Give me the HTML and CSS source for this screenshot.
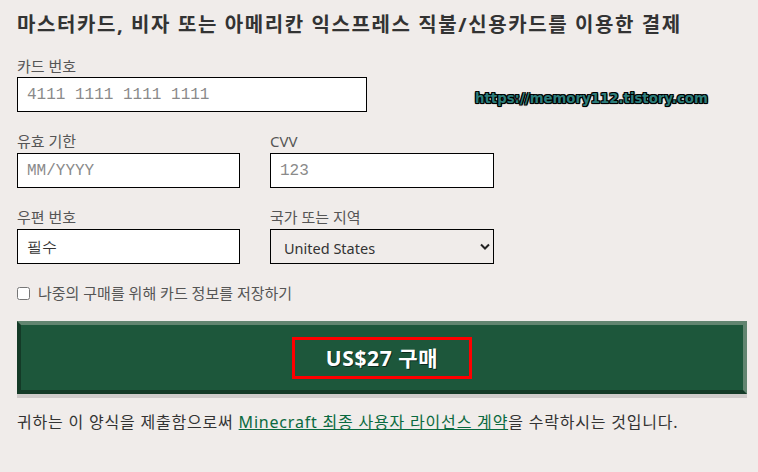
FILE: index.html
```html
<!DOCTYPE html>
<html lang="ko">
<head>
    <meta charset="UTF-8">
    <meta name="viewport" content="width=device-width, initial-scale=1.0">
    <title>결제</title>
    <link rel="stylesheet" href="styles.css">
</head>
<body>
    <main class="checkout">
        <h2 class="title">마스터카드, 비자 또는 아메리칸 익스프레스 직불/신용카드를 이용한 결제</h2>

        <div class="field card">
            <label>카드 번호</label>
            <input type="text" class="mono" placeholder="4111 1111 1111 1111">
        </div>

        <div class="row">
            <div class="field">
                <label>유효 기한</label>
                <input type="text" class="mono" placeholder="MM/YYYY">
            </div>
            <div class="field">
                <label>CVV</label>
                <input type="text" class="mono" placeholder="123">
            </div>
        </div>

        <div class="row">
            <div class="field">
                <label>우편 번호</label>
                <input type="text" class="req" placeholder="필수">
            </div>
            <div class="field">
                <label>국가 또는 지역</label>
                <div class="selectbox">
                    <select>
                        <option>United States</option>
                        <option>대한민국</option>
                    </select>
                    <svg width="10" height="7" viewBox="0 0 10 7"><path d="M1 1.5 L5 5.5 L9 1.5" fill="none" stroke="#222" stroke-width="2"/></svg>
                </div>
            </div>
        </div>

        <label class="save"><input type="checkbox"> 나중의 구매를 위해 카드 정보를 저장하기</label>

        <button class="buy"><span class="price">US$27 구매</span></button>

        <p class="terms">귀하는 이 양식을 제출함으로써 <a href="#">Minecraft 최종 사용자 라이선스 계약</a>을 수락하시는 것입니다.</p>
    </main>

    <div class="watermark">https://memory112.tistory.com</div>
</body>
</html>
```

FILE: styles.css
```css
*{margin:0px;padding:0px;box-sizing:border-box;}

body{background:#f0ecea;color:#333;font-family:"Noto Sans","Noto Sans CJK KR",sans-serif;position:relative;}

.checkout{padding:11px 11px 0 17px;}

.title{font-size:20px;line-height:28px;font-weight:bold;color:#333;letter-spacing:1.6px;margin-bottom:17px;white-space:nowrap;}

.field label{display:block;font-size:15px;line-height:20px;color:#555;margin-bottom:1px;}

.field input{
    width:100%;height:35px;
    border:1px solid #000;background:#fff;
    padding:0 9px;font-size:15px;color:#333;outline:none;
}

.card{width:350px;margin-bottom:19px;}

.mono{font-family:"Liberation Mono",monospace;font-size:16px !important;}
.mono::placeholder{color:#8a8a8a;}
.req::placeholder{color:#333;}

.row{display:grid;grid-template-columns:223px 224px;column-gap:30px;margin-bottom:19px;}
.row .field label{margin-bottom:2px;}

.selectbox{display:grid;align-items:center;}
.selectbox select,.selectbox svg{grid-area:1/1;}
.selectbox select{
    appearance:none;-webkit-appearance:none;
    height:35px;border:1px solid #000;background:transparent;
    padding:3px 13px 0;font-family:inherit;font-size:14.5px;color:#333;
}
.selectbox svg{justify-self:end;margin-right:4px;pointer-events:none;}

.save{display:flex;align-items:center;gap:8px;font-size:15px;line-height:20px;color:#555;margin-bottom:18px;}
.save input{width:13px;height:13px;margin:0;}

.buy{
    width:730px;height:73px;
    display:flex;justify-content:center;align-items:center;
    background:#1d573b;
    border-top:4px solid #628570;border-right:4px solid #628570;
    border-left:4px solid #143a27;border-bottom:4px solid #143a27;
    box-shadow:0 4px 0 #cfcbca;
    cursor:pointer;
}

.price{
    display:block;width:180px;height:42px;line-height:36px;text-align:center;
    border:3px solid #ff0000;
    color:#fff;font-family:"Noto Sans","Noto Sans CJK KR",sans-serif;font-size:21px;font-weight:bold;letter-spacing:0.6px;
    text-shadow:1px 1px 0 #0b2a1b;
}

.terms{margin-top:17px;font-size:16px;line-height:22px;color:#333;letter-spacing:0.8px;white-space:nowrap;}
.terms a{color:#0a6a40;}

.watermark{
    position:absolute;left:475px;top:91px;
    font-family:"DejaVu Sans",sans-serif;font-weight:bold;font-size:13.3px;color:#2b7c7a;
    text-shadow:-1px -1px 0 #000,1px -1px 0 #000,-1px 1px 0 #000,1px 1px 0 #000,0 1px 1px #000,1px 0 1px #000,-1px 0 1px #000;
}
```
